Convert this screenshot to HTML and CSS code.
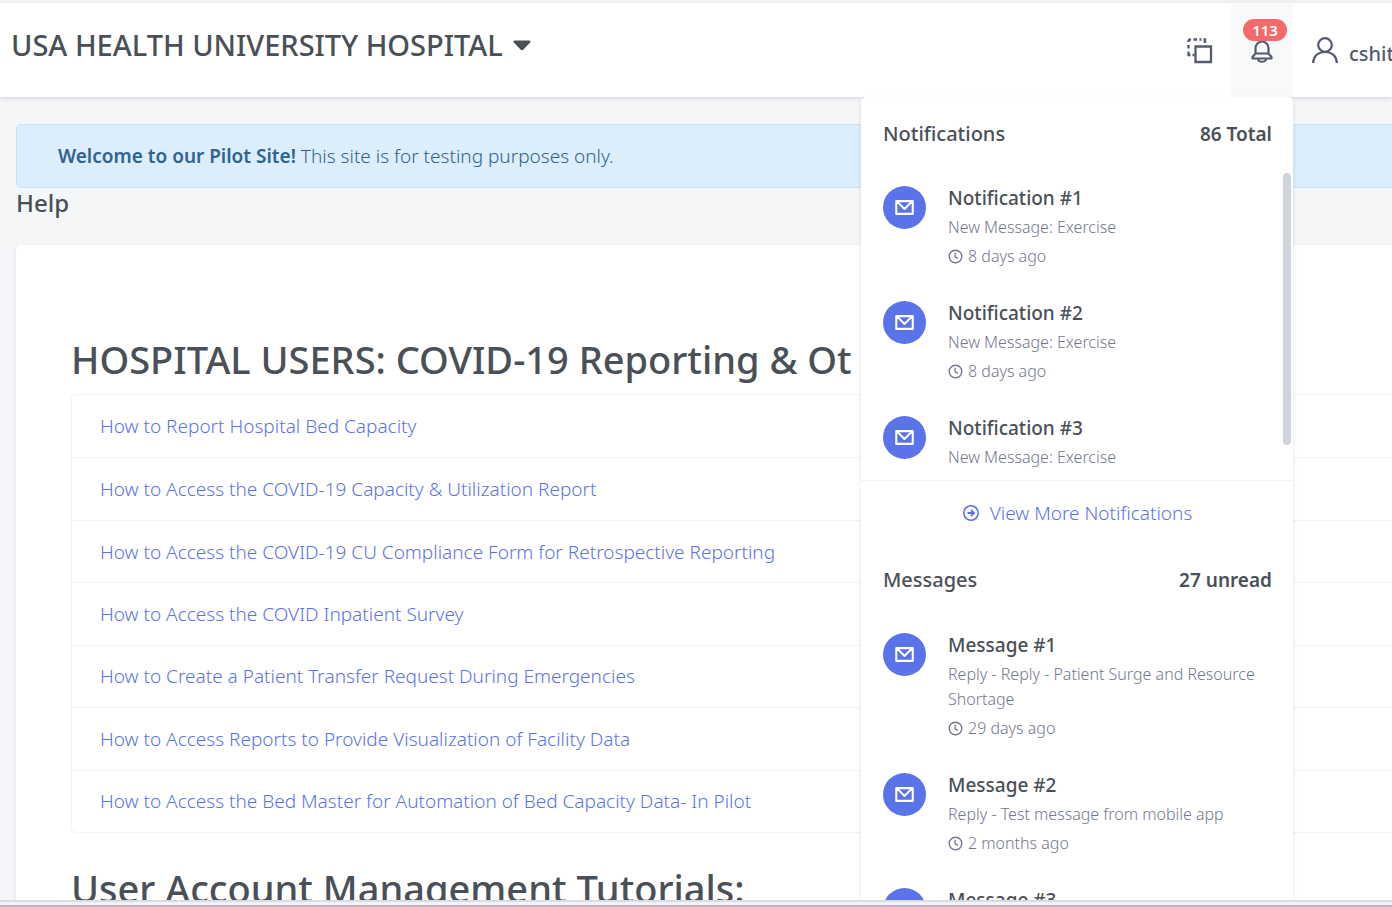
FILE: index.html
```html
<!DOCTYPE html>
<html lang="en">
<head>
<meta charset="utf-8">
<title>Help</title>
<link rel="stylesheet" href="styles.css">
</head>
<body>
<svg class="sprite" aria-hidden="true">
  <symbol id="mail" viewBox="0 0 20 16"><path fill="none" stroke="currentColor" stroke-width="2.2" stroke-linejoin="round" d="M1.200 1.200h17.600v13.600H1.200zM2.500 2l7.500 7.500L17.500 2"/></symbol>
  <symbol id="clock" viewBox="0 0 16 16"><circle cx="8" cy="8" r="6.7" fill="none" stroke="currentColor" stroke-width="1.5"/><path fill="none" stroke="currentColor" stroke-width="1.4" d="M7.6 4v4.4l3 1.6"/></symbol>
</svg>
<div class="screen">
  <header class="topbar">
    <button class="facility" type="button">USA HEALTH UNIVERSITY HOSPITAL
      <svg class="caret" viewBox="0 0 18 11"><path fill="currentColor" d="M1.8.5h14.4c1.3 0 1.8 1.2 1 2.1l-6.700 7c-.9.9-2.100.9-3 0l-6.700-7C0 1.700.5.500 1.800.500z"/></svg>
    </button>
    <nav class="tools">
      <button class="tool" type="button" aria-label="Switch view">
        <svg class="icon-copy" viewBox="0 0 26 26" fill="none" stroke="currentColor" stroke-width="2.300"><path d="M8.500 8.500h15.500v15.500H8.500z"/><path d="M1.500 4V3a1.500 1.500 0 0 1 1.500-1.500h1M6.500 1.500h3.500M12.500 1.500h2M16.500 1.500H18v3.500M1.500 7v3.500M1.500 13.500V17h2M5.500 17h2"/></svg>
      </button>
      <div class="bell-item">
        <button class="tool tool-active" type="button" aria-label="Notifications">
          <svg class="icon-bell" viewBox="0 0 22 24" fill="none" stroke="currentColor" stroke-width="2.200" stroke-linejoin="round"><path d="M4.500 15V9a6.500 6.500 0 0 1 13 0v6M4.500 14.500h13l3 3.500v1.500h-19V18zM7 20.500c1 3 7 3 8 0"/></svg>
          <span class="badge">113</span>
        </button>
        <section class="menu">
          <div class="menu-head"><h2>Notifications</h2><strong>86 Total</strong></div>
          <div class="scroller">
            <ul class="feed">
              <li><span class="dot"><svg><use href="#mail"/></svg></span><div><h3>Notification #1</h3><p>New Message: Exercise</p><p class="when"><svg><use href="#clock"/></svg>8 days ago</p></div></li>
              <li><span class="dot"><svg><use href="#mail"/></svg></span><div><h3>Notification #2</h3><p>New Message: Exercise</p><p class="when"><svg><use href="#clock"/></svg>8 days ago</p></div></li>
              <li><span class="dot"><svg><use href="#mail"/></svg></span><div><h3>Notification #3</h3><p>New Message: Exercise</p></div></li>
            </ul>
            <span class="thumb"></span>
          </div>
          <a class="more" href="#"><svg viewBox="0 0 18 18" fill="none" stroke="currentColor"><circle cx="9" cy="9" r="7.200" stroke-width="1.600"/><path stroke-width="1.800" d="M5.500 9h6M9 6l3 3-3 3"/></svg>View More Notifications</a>
          <div class="menu-head menu-head-next"><h2>Messages</h2><strong>27 unread</strong></div>
          <ul class="feed">
            <li><span class="dot"><svg><use href="#mail"/></svg></span><div><h3>Message #1</h3><p>Reply - Reply - Patient Surge and Resource Shortage</p><p class="when"><svg><use href="#clock"/></svg>29 days ago</p></div></li>
            <li><span class="dot"><svg><use href="#mail"/></svg></span><div><h3>Message #2</h3><p>Reply - Test message from mobile app</p><p class="when"><svg><use href="#clock"/></svg>2 months ago</p></div></li>
            <li><span class="dot"><svg><use href="#mail"/></svg></span><div><h3>Message #3</h3></div></li>
          </ul>
        </section>
      </div>
      <button class="user" type="button">
        <svg class="icon-user" viewBox="0 0 26 26" fill="none" stroke="currentColor" stroke-width="2.200"><circle cx="13" cy="8" r="6.800"/><path d="M1.200 26c0-6 4-11 11.800-11s11.800 5 11.800 11"/></svg>
        <span>cshit</span>
      </button>
    </nav>
  </header>
  <main class="page">
    <div class="alert" role="status"><p><strong>Welcome to our Pilot Site!</strong> This site is for testing purposes only.</p></div>
    <h1>Help</h1>
    <section class="card">
      <h2>HOSPITAL USERS: COVID-19 Reporting &amp; Ot</h2>
      <ul class="topics">
        <li><a href="#">How to Report Hospital Bed Capacity</a></li>
        <li><a href="#">How to Access the COVID-19 Capacity &amp; Utilization Report</a></li>
        <li><a href="#">How to Access the COVID-19 CU Compliance Form for Retrospective Reporting</a></li>
        <li><a href="#">How to Access the COVID Inpatient Survey</a></li>
        <li><a href="#">How to Create a Patient Transfer Request During Emergencies</a></li>
        <li><a href="#">How to Access Reports to Provide Visualization of Facility Data</a></li>
        <li><a href="#">How to Access the Bed Master for Automation of Bed Capacity Data- In Pilot</a></li>
      </ul>
      <h2>User Account Management Tutorials:</h2>
    </section>
  </main>
</div>
<div class="frame-edge"></div>
</body>
</html>
```

FILE: styles.css
```css
* { box-sizing: border-box; }
body {
  margin: 0;
  height: 100vh;
  overflow: hidden;
  display: flex;
  flex-direction: column;
  background: #f5f6f8;
  color: #495057;
  font: 300 19px/28px "Noto Sans", sans-serif;
}
h1, h2, h3, p, ul { margin: 0; padding: 0; }
h1, h2, h3 { font-weight: 500; }
ul { list-style: none; }
a { color: #5b73e8; text-decoration: none; }
button { margin: 0; padding: 0; border: 0; background: none; color: inherit; font: inherit; }
svg { display: block; flex: none; }
.sprite { position: absolute; width: 0; height: 0; }

.screen { flex: 1; min-height: 0; overflow: hidden; display: flex; flex-direction: column; }
.topbar {
  position: relative;
  z-index: 1;
  flex: none;
  height: 97px;
  display: flex;
  justify-content: space-between;
  background: #fff;
  border-top: 3px solid #efeff0;
  box-shadow: 0 2px 4px rgba(15, 34, 58, .12);
}
.facility {
  display: flex;
  align-items: center;
  gap: 10px;
  height: 84px;
  padding-left: 11px;
  font-size: 29px;
  font-weight: 500;
  white-space: nowrap;
}
.caret { width: 18px; height: 11px; }
.tools { display: flex; color: #555b6d; }
.tool { display: flex; justify-content: center; align-items: center; width: 62px; height: 100%; padding-top: 2px; }
.tool-active { position: relative; background: #f8f9fb; }
.bell-item { position: relative; }
.icon-copy { width: 26px; height: 26px; }
.icon-bell { width: 22px; height: 24px; }
.badge {
  position: absolute;
  top: 16px;
  left: 12px;
  width: 44px;
  border-radius: 11px;
  background: #f46a6a;
  color: #fff;
  font-size: 15px;
  font-weight: 600;
  line-height: 22px;
}
.user {
  display: flex;
  align-items: center;
  gap: 11px;
  width: 99px;
  padding-left: 19px;
  overflow: hidden;
  font-size: 20px;
  font-weight: 500;
}
.user span { padding-top: 8px; }
.icon-user { width: 26px; height: 26px; }

.menu {
  position: absolute;
  top: 100%;
  right: 0;
  width: 432px;
  background: #fff;
  color: #495057;
  border-radius: 5px;
  box-shadow: 0 3px 5px rgba(15, 34, 58, .12);
}
.menu-head { display: flex; justify-content: space-between; align-items: center; padding: 22px 21px 22px 22px; }
.menu-head-next { padding-top: 20px; padding-bottom: 23px; }
.menu-head h2 { font-size: 20px; line-height: 30px; }
.menu-head strong { font-weight: 600; line-height: 30px; }
.scroller { position: relative; height: 310px; overflow: hidden; border-bottom: 1px solid #f3f3f5; }
.thumb { position: absolute; top: 2px; right: 2px; width: 8px; height: 272px; border-radius: 4px; background: #ced4da; }
.feed li { display: flex; gap: 22px; padding: 15px 21px 17px 22px; }
.dot {
  flex: none;
  display: flex;
  align-items: center;
  justify-content: center;
  width: 43px;
  height: 43px;
  border-radius: 50%;
  background: #5b73e8;
  color: #fff;
}
.dot svg { width: 19px; height: 15px; }
.feed h3 { font-size: 19px; line-height: 24px; padding-bottom: 5px; }
.feed p { color: #74788d; font-size: 16px; line-height: 25px; }
.feed .when { display: flex; align-items: center; gap: 5px; padding-top: 4px; }
.when svg { width: 15px; height: 15px; }
.more { display: flex; justify-content: center; align-items: center; gap: 10px; padding: 18px 0; }
.more svg { width: 18px; height: 18px; }

.page { flex: none; padding: 27px 0 0 16px; }
.alert {
  margin-right: -16px;
  padding: 17px 41px;
  border: 1px solid #c8e2f8;
  border-radius: 5px;
  background: #dcedfb;
  color: #306391;
}
.alert strong { font-weight: 600; }
.page h1 { font-size: 24px; line-height: 30px; }
.card {
  margin: 27px -16px 0 0;
  padding: 91px 0 0 55px;
  background: #fff;
  border-radius: 5px;
  box-shadow: 0 2px 4px rgba(15, 34, 58, .12);
}
.card h2 { font-size: 38px; line-height: 46px; padding-bottom: 12px; white-space: nowrap; }
.topics {
  display: grid;
  grid-auto-rows: 1fr;
  min-height: 439px;
  margin-bottom: 32px;
  border: 1px solid #f3f3f5;
  border-radius: 5px;
}
.topics li { display: flex; align-items: center; padding: 0 28px; }
.topics li + li { border-top: 1px solid #f3f3f5; }
.frame-edge { flex: none; height: 7px; background: #f3f3f5; border-top: 2px solid #dcdcde; border-bottom: 2px solid #b8bac8; }
```
